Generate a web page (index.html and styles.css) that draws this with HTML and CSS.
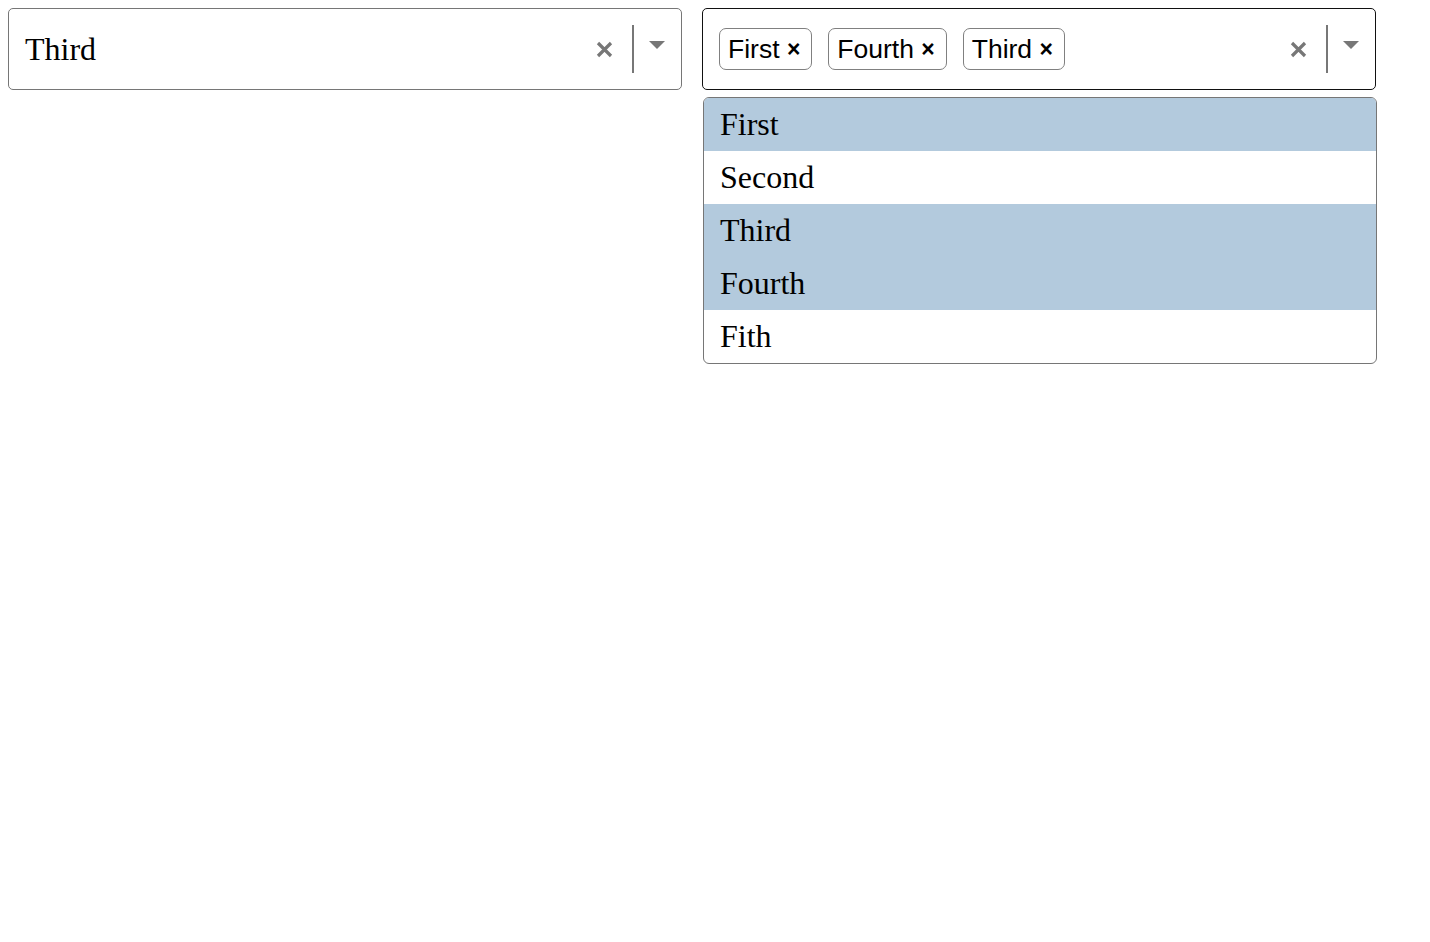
FILE: index.html
```html
<!DOCTYPE html>
<html>
<head>
<meta charset="utf-8">
<link rel="stylesheet" href="styles.css">
</head>
<body>
<div class="page">
  <div class="select">
    <div class="field">
      <div class="value">Third</div>
      <div class="controls">
        <svg class="clear" width="17" height="17" viewBox="0 0 17 17"><path d="M2 2 L15 15 M15 2 L2 15" stroke="#777" stroke-width="3.2" fill="none"/></svg>
        <span class="sep"></span>
        <svg class="arrow" width="16" height="8" viewBox="0 0 16 8"><path d="M0 0 H16 L8 8 Z" fill="#777"/></svg>
      </div>
    </div>
  </div>
  <div class="select">
    <div class="field focused">
      <div class="tags">
        <span class="tag">First <span class="x">×</span></span>
        <span class="tag">Fourth <span class="x">×</span></span>
        <span class="tag">Third <span class="x">×</span></span>
      </div>
      <div class="controls">
        <svg class="clear" width="17" height="17" viewBox="0 0 17 17"><path d="M2 2 L15 15 M15 2 L2 15" stroke="#777" stroke-width="3.2" fill="none"/></svg>
        <span class="sep"></span>
        <svg class="arrow" width="16" height="8" viewBox="0 0 16 8"><path d="M0 0 H16 L8 8 Z" fill="#777"/></svg>
      </div>
    </div>
    <div class="listbox">
      <div class="item picked">First</div>
      <div class="item">Second</div>
      <div class="item picked">Third</div>
      <div class="item picked">Fourth</div>
      <div class="item">Fith</div>
    </div>
  </div>
</div>
</body>
</html>
```
FILE: styles.css
```css
html, body {
  margin: 0;
  padding: 0;
  background: #fff;
}
.page {
  padding: 8px;
  display: flex;
  gap: 20px;
  align-items: flex-start;
}
.select {
  width: 674px;
  display: flex;
  flex-direction: column;
}
.field {
  box-sizing: border-box;
  width: 674px;
  height: 82px;
  border: 1px solid #767676;
  border-radius: 5px;
  display: flex;
  align-items: center;
  padding: 0 16px;
}
.field.focused {
  border-color: #111;
}
.value {
  font-family: "Liberation Serif", "Times New Roman", serif;
  font-size: 32px;
  color: #000;
}
.controls {
  margin-left: auto;
  display: flex;
  align-items: center;
}
.clear {
  display: block;
}
.sep {
  display: block;
  width: 2px;
  height: 48px;
  background: #777;
  margin: 0 15px 0 19px;
}
.arrow {
  display: block;
  margin-top: -9px;
}
.tags {
  display: flex;
  gap: 16px;
  align-items: center;
}
.tag {
  box-sizing: border-box;
  height: 42px;
  display: flex;
  align-items: center;
  border: 1px solid #808080;
  border-radius: 7px;
  padding: 0 11px 0 8px;
  font-family: "Liberation Sans", Arial, sans-serif;
  font-size: 26.5px;
  color: #000;
  white-space: pre;
}
.tag .x {
  font-weight: 700;
  font-size: 23px;
}
.listbox {
  margin-top: 7px;
  margin-left: 1px;
  width: 674px;
  box-sizing: border-box;
  border: 1px solid #767676;
  border-radius: 6px;
  overflow: hidden;
  background: #fff;
}
.item {
  height: 53px;
  line-height: 53px;
  padding-left: 16px;
  font-family: "Liberation Serif", "Times New Roman", serif;
  font-size: 32px;
  color: #000;
}
.item.picked {
  background: #b3cadd;
}
```
